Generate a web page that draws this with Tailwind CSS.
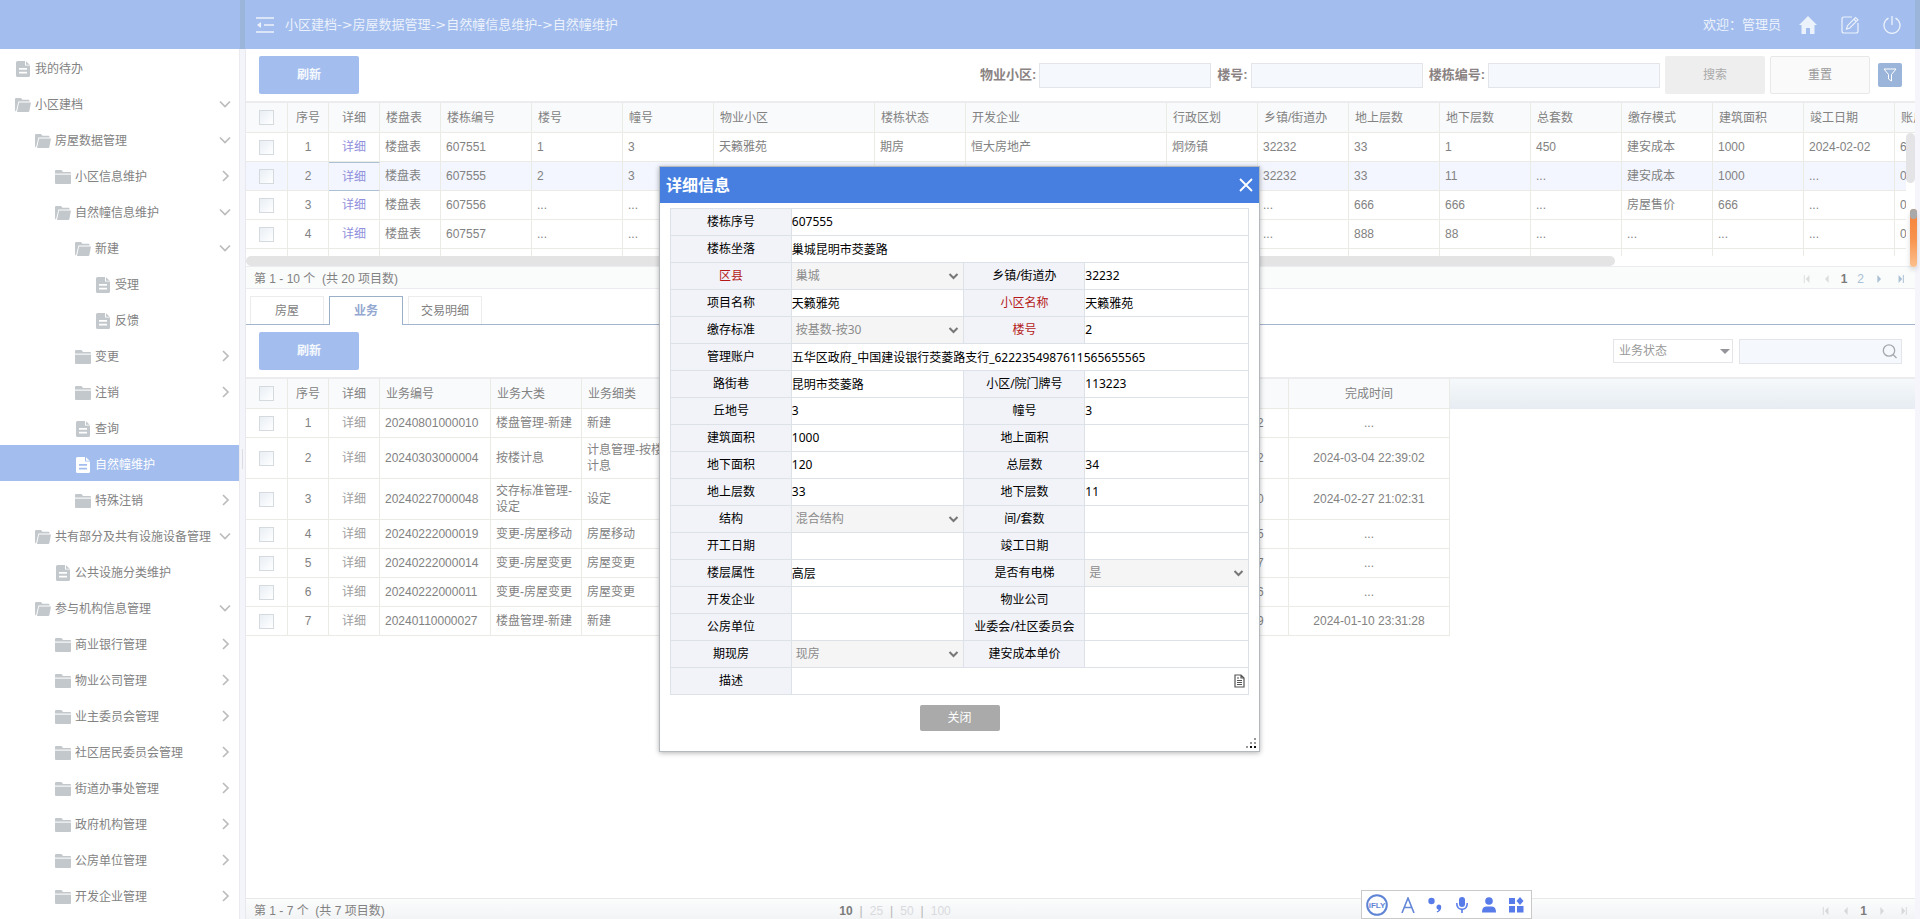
<!DOCTYPE html>
<html lang="zh-CN">
<head>
<meta charset="utf-8">
<title>自然幢维护</title>
<script src="https://cdn.jsdelivr.net/npm/@tailwindcss/browser@4"></script>
</head>
<body class="relative flex h-screen flex-col overflow-hidden bg-white font-['Liberation_Sans','Noto_Sans_CJK_SC',sans-serif] text-xs text-[#828282]">

<svg class="hidden" aria-hidden="true">
  <symbol id="i-file" viewBox="0 0 14 16"><path fill="currentColor" fill-rule="evenodd" d="M1.500 0H9V4.500H14V14.500Q14 16 12.500 16H1.500Q0 16 0 14.500V1.500Q0 0 1.500 0ZM3 7V8.700H11V7ZM3 10.700V12.400H11V10.700Z"/><path fill="currentColor" d="M10 0.300L13.700 3.700H10Z"/></symbol>
  <symbol id="i-folder" viewBox="0 0 16 14"><path fill="currentColor" d="M0 1Q0 0 1 0H6.500L8 2H15Q16 2 16 3V3.600H0Z"/><path fill="currentColor" opacity=".45" d="M0 3.600H16V4.800H0Z"/><path fill="currentColor" d="M0 5H16V13Q16 14 15 14H1Q0 14 0 13Z"/></symbol>
  <symbol id="i-open" viewBox="0 0 16 14"><path fill="currentColor" d="M0 1Q0 0 1 0H6L7.500 1.800H13.500Q14.500 1.800 14.500 2.800V3.600H3.400L1 13.500Q0 13 0 12Z"/><path fill="currentColor" d="M4 4.500H16L14.400 13Q14.200 14 13.200 14H2Z"/></symbol>
  <symbol id="i-down" viewBox="0 0 12 12"><path fill="none" stroke="currentColor" stroke-width="1.700" d="M1 3.500L6 8.500L11 3.500"/></symbol>
  <symbol id="i-right" viewBox="0 0 12 12"><path fill="none" stroke="currentColor" stroke-width="1.700" d="M4 1L9 6L4 11"/></symbol>
  <symbol id="i-first" viewBox="0 0 8 10"><path fill="currentColor" d="M0 0H1.200V10H0ZM7 0V10L2.500 5Z"/></symbol>
  <symbol id="i-prev" viewBox="0 0 8 10"><path fill="currentColor" d="M6 0V10L1.500 5Z"/></symbol>
  <symbol id="i-next" viewBox="0 0 8 10"><path fill="currentColor" d="M2 0V10L6.500 5Z"/></symbol>
  <symbol id="i-last" viewBox="0 0 8 10"><path fill="currentColor" d="M1 0V10L5.500 5ZM6.300 0H7.500V10H6.300Z"/></symbol>
</svg>

<header class="flex h-[49px] shrink-0 bg-[#a3beee] text-[13px] text-white">
  <div class="w-60"></div>
  <div class="w-[5px] bg-[#9ab5d9]"></div>
  <div class="flex flex-1 items-center pr-[14px] pl-[11px]">
    <button aria-label="收起菜单" class="opacity-80">
      <svg class="block h-4 w-[18px]" viewBox="0 0 18 16" fill="none" stroke="currentColor" stroke-width="1.500"><path d="M0 1H18M8 8H18M0 15H18"/><path fill="currentColor" stroke="none" d="M5 5V11L1 8Z"/></svg>
    </button>
    <nav class="ml-[11px] flex flex-1 whitespace-nowrap opacity-80" id="crumbs"></nav>
    <span class="opacity-80">欢迎：管理员</span>
    <button aria-label="首页" class="ml-[18px] opacity-80"><svg class="block size-[18px]" viewBox="0 0 18 18" fill="currentColor"><path d="M9 0L18 9H15.500V18H11V12H7V18H2.500V9H0Z"/></svg></button>
    <button aria-label="修改" class="ml-6 opacity-80"><svg class="block size-[18px]" viewBox="0 0 18 18" fill="none" stroke="currentColor" stroke-width="1.200"><path d="M11 1H3Q1 1 1 3V15Q1 17 3 17H15Q17 17 17 15V7"/><path d="M5.500 13L6.500 9.700L14.500 1.500L17 3.800L8.800 12ZM13 3.200L15.400 5.500"/></svg></button>
    <button aria-label="退出" class="ml-6 opacity-80"><svg class="block size-[18px]" viewBox="0 0 18 18" fill="none" stroke="currentColor" stroke-width="1.300"><path d="M5.500 2.200A8 8 0 1 0 12.500 2.200M9 0V9"/></svg></button>
  </div>
  <div class="w-[5px] bg-[#9ab5d9]"></div>
</header>

<div class="flex min-h-0 flex-1">
  <aside class="w-60 shrink-0 overflow-hidden border-r border-[#ebebef]"><ul id="menu"></ul></aside>
  <div class="flex w-[5px] shrink-0 items-center justify-center bg-[#f4f5fb]"><span class="mb-[50px] h-5 w-px bg-[#dcdde4]"></span></div>

  <main class="flex min-w-0 flex-1 flex-col border-l border-[#e8e8ee]">
    <div class="flex h-[52px] shrink-0 items-center pr-[13px] pl-[13px]">
      <button class="h-[38px] w-[100px] rounded-xs bg-[#a3beee] font-bold text-white/90">刷新</button>
      <form class="ml-auto flex items-center text-[13px] text-[#8b8383]">
        <label for="f1" class="mr-[3px] font-bold">物业小区:</label><input id="f1" class="mr-[6px] h-[25px] w-[172px] border border-[#e3e5e8] bg-[#f5f8fc]">
        <label for="f2" class="mr-[3px] font-bold">楼号:</label><input id="f2" class="mr-[6px] h-[25px] w-[172px] border border-[#e3e5e8] bg-[#f5f8fc]">
        <label for="f3" class="mr-[3px] font-bold">楼栋编号:</label><input id="f3" class="mr-[5px] h-[25px] w-[172px] border border-[#e3e5e8] bg-[#f5f8fc]">
        <button type="button" class="mr-[5px] h-[38px] w-[100px] rounded-xs bg-[#eeeeee] text-xs text-[#aaaaaa]">搜索</button>
        <button type="button" class="mr-2 h-[38px] w-[100px] rounded-xs border border-[#e8e8e8] bg-[#fafafa] text-xs text-[#999999]">重置</button>
        <button type="button" aria-label="筛选" class="grid size-6 place-items-center rounded-xs bg-[#9ab5d9] text-white"><svg class="h-[14px] w-[14px]" viewBox="0 0 14 14" fill="none" stroke="currentColor"><path d="M1 1H13L8.500 6.500V13L5.500 11V6.500Z"/></svg></button>
      </form>
    </div>

    <section class="relative h-[155px] shrink-0 overflow-hidden border-t-2 border-[#ececee]">
      <table class="w-[1740px] table-fixed border-separate border-spacing-0" id="grid1"></table>
      <div class="absolute top-[30px] right-0 bottom-0 w-[9px] bg-white"><div class="h-[50px] rounded-full bg-[#e4e4e6]"></div></div>
    </section>
    <div class="h-[10px] shrink-0"><div class="h-full w-[82%] rounded-full bg-[#e4e4e4]"></div></div>
    <div class="flex h-[23px] shrink-0 items-center border-y border-[#ebecef] bg-[#fafbfb] pt-[2px] pr-[10px] pl-2">
      <span class="flex-1">第 1 - 10 个&nbsp; (共 20 项目数)</span>
      <nav class="flex items-center text-[#a9c0d4]" aria-label="分页">
        <button aria-label="首页" class="mr-3 text-[#dddddd]"><svg class="block h-2 w-2"><use href="#i-first"/></svg></button>
        <button aria-label="上一页" class="mr-[10px] text-[#dddddd]"><svg class="block h-2 w-2"><use href="#i-prev"/></svg></button>
        <span class="mr-[10px] font-bold text-[#7c7c7c]">1</span>
        <a href="#" class="mr-[11px]">2</a>
        <button aria-label="下一页" class="mr-[14px]"><svg class="block h-2 w-2"><use href="#i-next"/></svg></button>
        <button aria-label="末页"><svg class="block h-2 w-2"><use href="#i-last"/></svg></button>
      </nav>
    </div>

    <div class="flex h-9 shrink-0 items-end gap-[5px] border-b border-[#a3b4ce] pl-1" role="tablist">
      <button role="tab" class="h-7 w-[74px] border border-b-0 border-[#ececec]">房屋</button>
      <button role="tab" aria-selected="true" class="-mb-px h-[29px] w-[74px] border border-b-0 border-[#9ab0c8] bg-white font-bold text-[#93a8d0]">业务</button>
      <button role="tab" class="h-7 w-[74px] border border-b-0 border-[#ececec]">交易明细</button>
    </div>

    <div class="flex h-[52px] shrink-0 items-center pr-[13px] pl-[13px]">
      <button class="h-[38px] w-[100px] rounded-xs bg-[#a3beee] font-bold text-white/90">刷新</button>
      <div class="relative ml-auto">
        <select aria-label="业务状态" class="block h-6 w-[120px] appearance-none border border-[#e3e5e8] bg-white pl-[5px] text-[#999999]"><option>业务状态</option></select>
        <svg class="pointer-events-none absolute top-[10px] right-[3px] h-[5px] w-[10px] fill-[#94949a]" viewBox="0 0 10 5"><path d="M0 0H10L5 5Z"/></svg>
      </div>
      <div class="relative ml-[6px]">
        <input type="search" aria-label="查询" class="block h-[25px] w-[163px] border border-[#e3e5e8] bg-[#f5f8fc]">
        <svg class="pointer-events-none absolute top-[5px] right-[5px] size-[15px]" viewBox="0 0 15 15" fill="none" stroke="#a5a8ac" stroke-width="1.300"><circle cx="7" cy="6.500" r="5.700"/><path d="M11 10.500L14.500 14"/></svg>
      </div>
    </div>
    <section class="min-h-0 flex-1 overflow-hidden border-t-2 border-[#ececee]">
      <table class="w-full table-fixed border-separate border-spacing-0" id="grid2"></table>
    </section>
    <div class="-mb-1 grid h-[25px] shrink-0 grid-cols-[1fr_auto_1fr] items-center border-t border-[#e8e8ea] bg-linear-to-b from-[#fbfcfc] to-[#f1f2f4] pr-[7px] pl-2">
      <span>第 1 - 7 个&nbsp; (共 7 项目数)</span>
      <div class="mr-[372px] flex gap-[7px] text-[#d8dade]">
        <b class="text-[#7c7c7c]">10</b><span class="text-[#b5b5b5]">|</span><a href="#">25</a><span class="text-[#b5b5b5]">|</span><a href="#">50</a><span class="text-[#b5b5b5]">|</span><a href="#">100</a>
      </div>
      <nav class="flex items-center justify-end text-[#d8d8da]" aria-label="分页">
        <button aria-label="首页" class="mr-3"><svg class="block h-2 w-2"><use href="#i-first"/></svg></button>
        <button aria-label="上一页" class="mr-[10px]"><svg class="block h-2 w-2"><use href="#i-prev"/></svg></button>
        <b class="mr-[11px] text-[#7c7c7c]">1</b>
        <button aria-label="下一页" class="mr-[14px]"><svg class="block h-2 w-2"><use href="#i-next"/></svg></button>
        <button aria-label="末页"><svg class="block h-2 w-2"><use href="#i-last"/></svg></button>
      </nav>
    </div>
  </main>
  <div class="w-[5px] shrink-0 bg-[#f5f5fb]"></div>
</div>

<!-- Floating side handle -->
<div class="absolute top-[209px] right-[3px] h-[58px] w-[7px] overflow-hidden rounded-full bg-linear-to-b from-[#f5813a] via-[#f7924c] to-[#fbc08c] shadow-[0_3px_5px_rgba(0,0,0,0.15)]"><div class="h-[10px] rounded-b-full bg-[#a9a9a9]"></div></div>

<!-- Input method bar -->
<div class="absolute right-[388px] bottom-0 flex h-[29px] w-[171px] items-center border border-[#c9c9c9] bg-white pl-[4px] text-[#577be8]">
  <svg class="size-[22px]" viewBox="0 0 22 22"><circle cx="11" cy="11" r="9.800" fill="none" stroke="#5f84d6" stroke-width="2"/><text x="11" y="14" text-anchor="middle" font-size="8" font-weight="700" fill="#5f84d6" font-family="Liberation Sans, sans-serif">iFLY</text></svg>
  <svg class="ml-[13px] h-4 w-[14px]" viewBox="0 0 14 16" fill="none" stroke="#6487d8" stroke-width="1.600"><path d="M1 16L7 1L13 16M3.200 10.500H10.800"/></svg>
  <svg class="ml-[13px] h-4 w-[14px]" viewBox="0 0 14 16" fill="currentColor"><circle cx="3.500" cy="4" r="3.200"/><path d="M10.500 7.500A2.700 2.700 0 0 1 13.200 10.500Q13 14 9 15.500L8.700 14.600Q10.500 13.800 10.700 12.800A2.700 2.700 0 0 1 10.500 7.500Z"/></svg>
  <svg class="ml-[14px] h-4 w-3" viewBox="0 0 12 16" fill="currentColor"><rect x="3" width="6" height="10" rx="3"/><path d="M0 6H1.500Q1.500 11.500 6 11.500T10.500 6H12Q12 12 6.800 13V16H5.200V13Q0 12 0 6Z"/></svg>
  <svg class="ml-[14px] h-4 w-[14px]" viewBox="0 0 14 16" fill="currentColor"><circle cx="7" cy="4" r="3.800"/><path d="M0 15.500Q0 9.500 4 9.500H10Q14 9.500 14 15.500Z"/></svg>
  <svg class="ml-3 size-4" viewBox="0 0 16 16" fill="currentColor"><path d="M1 1H7V7H1ZM12 0L15.500 4L12 8L8.500 4ZM1 9H7V15.500H1ZM9 9H15.500V15.500H9Z"/></svg>
</div>

<!-- Detail dialog -->
<div class="absolute inset-0 grid place-items-center pr-px pb-[2px]">
  <div role="dialog" aria-labelledby="dlg-title" class="relative flex w-[601px] flex-col border border-[#b3b9bd] bg-white pb-[20px] font-['Noto_Sans','Noto_Sans_CJK_SC',sans-serif] text-xs text-black shadow-[0_1px_5px_rgba(0,0,0,0.3)]">
    <div class="flex h-9 items-center justify-between bg-[#477fe0] pr-[6px] pl-[6px] text-white">
      <h2 id="dlg-title" class="text-base font-bold">详细信息</h2>
      <button aria-label="关闭窗口"><svg class="block h-[14px] w-[14px]" viewBox="0 0 14 14" stroke="currentColor" stroke-width="1.800"><path d="M1 1L13 13M13 1L1 13"/></svg></button>
    </div>
    <table class="mx-[10px] mt-[5px] table-fixed border-collapse" id="detail"></table>
    <button class="mt-[10px] h-[26px] w-20 self-center rounded-xs bg-[#aaaaaa] text-white">关闭</button>
    <svg class="absolute right-[2px] bottom-[2px] size-[11px]" viewBox="0 0 11 11"><path fill="#999999" d="M8 0H10V2H8ZM4 4H6V6H4ZM8 4H10V6H8ZM0 8H2V10H0Z"/><path fill="#111111" d="M4 8H6V10H4ZM8 8H10V10H8Z"/></svg>
  </div>
</div>

<script>
const crumbs = ['小区建档', '房屋数据管理', '自然幢信息维护', '自然幢维护'];
document.getElementById('crumbs').innerHTML = crumbs.map(t => `<a href="#">${t}</a>`)
  .join(`<span class="font-['DejaVu_Sans']">-&gt;</span>`);

// [level, icon, label, arrow]
const menu = [
  [0,'file','我的待办'],[0,'open','小区建档','down'],[1,'open','房屋数据管理','down'],[2,'folder','小区信息维护','right'],
  [2,'open','自然幢信息维护','down'],[3,'open','新建','down'],[4,'file','受理'],[4,'file','反馈'],[3,'folder','变更','right'],
  [3,'folder','注销','right'],[3,'file','查询'],[3,'file','自然幢维护','active'],[3,'folder','特殊注销','right'],
  [1,'open','共有部分及共有设施设备管理','down'],[2,'file','公共设施分类维护'],[1,'open','参与机构信息管理','down'],
  [2,'folder','商业银行管理','right'],[2,'folder','物业公司管理','right'],[2,'folder','业主委员会管理','right'],
  [2,'folder','社区居民委员会管理','right'],[2,'folder','街道办事处管理','right'],[2,'folder','政府机构管理','right'],
  [2,'folder','公房单位管理','right'],[2,'folder','开发企业管理','right'],
];
const pads = ['pl-[15px]', 'pl-[35px]', 'pl-[55px]', 'pl-[75px]', 'pl-[95px]'];
document.getElementById('menu').innerHTML = menu.map(([lv, icon, label, arrow]) => {
  const on = arrow === 'active';
  return `<li><a href="#" class="flex h-9 items-center pt-[3px] pr-2 whitespace-nowrap ${pads[lv]} ${on ? 'bg-[#a3beee] text-white' : ''}">
    <svg class="mr-1 w-4 shrink-0 ${icon === 'file' ? 'h-4' : 'h-[14px]'} ${on ? 'text-white' : 'text-[#c3c8cc]'}"><use href="#i-${icon}"/></svg>
    <span class="flex-1">${label}</span>${arrow && !on ? `<svg class="mb-[2px] size-3 text-[#bcbcbc]"><use href="#i-${arrow}"/></svg>` : ''}</a></li>`;
}).join('');

const line = 'border-r border-b border-[#ebebe6]';
const box = n => `<input type="checkbox" aria-label="选择${n}" class="block mx-auto size-[15px] appearance-none border border-[#d5dade] bg-linear-to-br from-[#e9eff5] to-white">`;
const cols = ws => '<colgroup>' + ws.map(w => w ? `<col style="width:${w}px">` : '<col>').join('') + '</colgroup>';

const h1 = ['楼盘表','楼栋编号','楼号','幢号','物业小区','楼栋状态','开发企业','行政区划','乡镇/街道办','地上层数','地下层数','总套数','缴存模式','建筑面积','竣工日期','账户'];
const r1 = [
  ['楼盘表','607551','1','3','天籁雅苑','期房','恒大房地产','炯炀镇','32232','33','1','450','建安成本','1000','2024-02-02','6'],
  ['楼盘表','607555','2','3','','','','','32232','33','11','...','建安成本','1000','...','0'],
  ['楼盘表','607556','...','...','','','','','...','666','666','...','房屋售价','666','...','0'],
  ['楼盘表','607557','...','...','','','','','...','888','88','...','...','...','...','0'],
];
document.getElementById('grid1').innerHTML = cols([42,41,51,61,91,91,91,161,91,201,91,91,91,91,91,91,91,91,91]) +
  `<thead><tr class="bg-[#f9fafc]"><th class="h-[30px] ${line}">${box('全部')}</th><th class="font-normal ${line}">序号</th><th class="font-normal ${line}">详细</th>` +
  h1.map(t => `<th class="pl-[6px] text-left font-normal whitespace-nowrap ${line}">${t}</th>`).join('') + '</tr></thead><tbody>' +
  r1.map((r, i) => `<tr class="${i === 1 ? 'bg-[#f3f6fe]' : ''}"><td class="h-[29px] ${line}">${box(i + 1)}</td><td class="text-center ${line}">${i + 1}</td>
    <td class="text-center ${i === 1 ? 'border-y border-r border-y-[#adc0d4] border-r-[#ebebe6]' : line}"><a href="#" class="text-[#8f8fdc]">详细</a></td>` +
    r.map(t => `<td class="pl-[5px] whitespace-nowrap ${line}">${t}</td>`).join('') + '</tr>').join('') +
  `<tr><td class="h-[29px] ${line}">${box(5)}</td>${`<td class="${line}"></td>`.repeat(18)}</tr></tbody>`;

const r2 = [
  ['20240801000010','楼盘管理-新建','新建','2024-08-01 10:20:12','...'],
  ['20240303000004','按楼计息','计息管理-按楼计息','2024-03-03 22:38:52','2024-03-04 22:39:02'],
  ['20240227000048','交存标准管理-设定','设定','2024-02-27 21:02:20','2024-02-27 21:02:31'],
  ['20240222000019','变更-房屋移动','房屋移动','2024-02-22 17:30:15','...'],
  ['20240222000014','变更-房屋变更','房屋变更','2024-02-22 16:41:07','...'],
  ['20240222000011','变更-房屋变更','房屋变更','2024-02-22 15:12:26','...'],
  ['20240110000027','楼盘管理-新建','新建','2024-01-10 23:30:49','2024-01-10 23:31:28'],
];
document.getElementById('grid2').innerHTML = cols([42,41,51,111,91,91,455,161,161,0]) +
  `<thead><tr class="bg-[#f9fafc]"><th class="h-[30px] ${line}">${box('全部')}</th><th class="font-normal ${line}">序号</th><th class="font-normal ${line}">详细</th>` +
  ['业务编号','业务大类','业务细类',''].map(t => `<th class="pl-[6px] text-left font-normal ${line}">${t}</th>`).join('') +
  ['受理时间','完成时间'].map(t => `<th class="font-normal ${line}">${t}</th>`).join('') +
  '<th class="bg-linear-to-b from-[#f6f9fb] to-[#e6ecf2]"></th></tr></thead><tbody>' +
  r2.map((r, i) => `<tr><td class="${i === 1 || i === 2 ? 'h-[41px]' : 'h-[29px]'} ${line}">${box(i + 1)}</td><td class="text-center ${line}">${i + 1}</td><td class="text-center ${line}"><a href="#" class="text-[#a0a0a0]">详细</a></td>` +
    [r[0], r[1], r[2], ''].map(t => `<td class="px-[5px] leading-4 ${line}">${t}</td>`).join('') +
    `<td class="text-center ${line}">${r[3]}</td><td class="text-center ${line}">${r[4]}</td></tr>`).join('') + '</tbody>';

// Each field: [label, value, kind]; kind: s = select, r = required label, rs = both, m = memo
const fields = [
  [['楼栋序号','607555']],
  [['楼栋坐落','巢城昆明市茭菱路']],
  [['区县','巢城','rs'],['乡镇/街道办','32232']],
  [['项目名称','天籁雅苑'],['小区名称','天籁雅苑','r']],
  [['缴存标准','按基数-按30','s'],['楼号','2','r']],
  [['管理账户','五华区政府_中国建设银行茭菱路支行_6222354987611565655565']],
  [['路街巷','昆明市茭菱路'],['小区/院门牌号','113223']],
  [['丘地号','3'],['幢号','3']],
  [['建筑面积','1000'],['地上面积','']],
  [['地下面积','120'],['总层数','34']],
  [['地上层数','33'],['地下层数','11']],
  [['结构','混合结构','s'],['间/套数','']],
  [['开工日期',''],['竣工日期','']],
  [['楼层属性','高层'],['是否有电梯','是','s']],
  [['开发企业',''],['物业公司','']],
  [['公房单位',''],['业委会/社区委员会','']],
  [['期现房','现房','s'],['建安成本单价','']],
  [['描述','','m']],
];
document.getElementById('detail').innerHTML = cols([121,173,121,164]) + '<tbody>' + fields.map((row, i) =>
  '<tr>' + row.map(([label, value, kind = ''], j) => {
    const id = `d${i}-${j}`;
    const control = kind.includes('s')
      ? `<select id="${id}" disabled class="block h-[26px] w-full appearance-none bg-[#f5f5f5] pl-1 text-[#8c8c8c] opacity-100"><option>${value}</option></select>
         <svg class="pointer-events-none absolute top-[10px] right-1 h-[7px] w-[11px]" viewBox="0 0 11 7" fill="none" stroke="#777777" stroke-width="2"><path d="M1.500 1L5.500 5L9.500 1"/></svg>`
      : `<input id="${id}" readonly value="${value}" class="block h-[26px] w-full">` + (kind === 'm'
        ? '<svg class="absolute top-[6px] right-[3px] h-[14px] w-[11px]" viewBox="0 0 11 14" fill="none" stroke="#555555" stroke-width="1.200"><path d="M1 1H7L10 4V13H1ZM7 1V4H10M3 4H5M3 6.500H8M3 8.500H8M3 10.500H8"/></svg>' : '');
    return `<th scope="row" class="h-[27px] border border-[#dde2e8] bg-[#f2f3f8] p-0 text-center font-normal ${kind.includes('r') ? 'text-[#b51a1a]' : ''}"><label for="${id}">${label}</label></th>
      <td class="border border-[#dde2e8] p-0" colspan="${row.length === 1 ? 3 : 1}"><div class="relative">${control}</div></td>`;
  }).join('') + '</tr>').join('') + '</tbody>';
</script>
</body>
</html>
